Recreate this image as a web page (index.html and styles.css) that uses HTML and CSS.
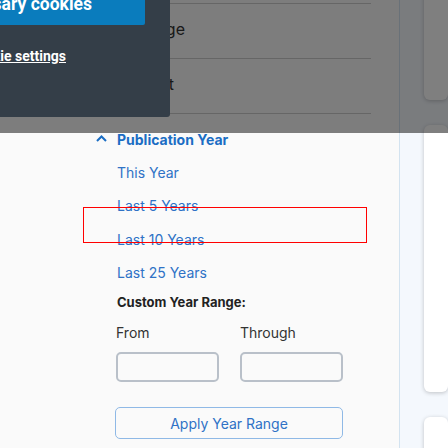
FILE: index.html
```html
<!DOCTYPE html>
<html>
<head>
<meta charset="utf-8">
<link rel="stylesheet" href="styles.css">
</head>
<body>
<div class="layout">
  <main class="main">
    <div class="rows">
      <div class="row row-first"></div>
      <div class="row"><span class="row-text row-text-a">Results per page</span></div>
      <div class="row"><span class="row-text row-text-b">Most Relevant</span></div>
    </div>
    <section class="filter">
      <h3 class="filter-head">
        <svg class="chev" width="11" height="7" viewBox="0 0 11 7"><path d="M1 6 L5.5 1.5 L10 6" fill="none" stroke="#1a6dc4" stroke-width="2"/></svg>
        <span>Publication Year</span>
      </h3>
      <ul class="opts">
        <li>This Year</li>
        <li>Last 5 Years</li>
        <li>Last 10 Years</li>
        <li>Last 25 Years</li>
      </ul>
      <div class="custom">Custom Year Range:</div>
      <div class="range">
        <label class="field"><span>From</span><input class="box" type="text"></label>
        <label class="field"><span>Through</span><input class="box" type="text"></label>
      </div>
      <button class="apply">Apply Year Range</button>
    </section>
  </main>
  <aside class="aside">
    <div class="card card-top"></div>
    <div class="card card-mid"></div>
    <div class="card card-low"></div>
  </aside>
</div>
<div class="highlight"></div>
<div class="overlay"></div>
<div class="cookie">
  <div class="cookie-btn"><span>Allow necessary cookies</span></div>
  <div class="cookie-link"><span>Cookie settings</span></div>
</div>
</body>
</html>
```
FILE: styles.css
```css
* { box-sizing: border-box; }
html, body { margin: 0; padding: 0; }
body {
  width: 448px;
  height: 448px;
  overflow: hidden;
  font-family: Inter, "Noto Sans", sans-serif;
  background: #fafafa;
  position: relative;
}
.layout {
  display: grid;
  grid-template-columns: 399px 1fr;
  height: 448px;
}
.main {
  background: #fafafa;
}
.rows {
  width: 371px;
}
.row {
  height: 55px;
  border-bottom: 1px solid #cdcdcd;
  display: flex;
  align-items: center;
  font-size: 16px;
  color: #333;
}
.row-first { height: 4px; }
.row-text { display: block; text-align: right; white-space: nowrap; }
.row-text-a { width: 185px; margin-top: -4px; }
.row-text-b { width: 174px; margin-top: -4px; }

.filter {
  padding: 17px 0 0 96px;
}
.filter-head {
  margin: 0;
  display: flex;
  align-items: center;
  gap: 10px;
  font-size: 14px;
  font-weight: 700;
  color: #1a6dc4;
  height: 16px;
}
.chev { display: block; margin-top: -1px; }
.opts {
  list-style: none;
  margin: 0;
  padding: 0 0 0 21px;
}
.opts li {
  font-size: 14px;
  color: #2f72c6;
  height: 33.3px;
  line-height: 16px;
}
.opts li:first-child { margin-top: 18px; }
.custom {
  margin: -4px 0 0 21px;
  font-size: 13px;
  font-weight: 700;
  color: #222;
  line-height: 16px;
}
.range {
  display: flex;
  gap: 21px;
  margin: 15px 0 0 20px;
}
.field {
  display: flex;
  flex-direction: column;
  gap: 11px;
  font-size: 14px;
  color: #333;
  line-height: 16px;
}
.box {
  width: 103px;
  height: 30px;
  border: 2px solid #b9c0c9;
  border-radius: 5px;
  background: #fafafa;
  margin: 0;
  padding: 0;
}
.apply {
  display: block;
  margin: 25px 0 0 19px;
  width: 228px;
  height: 32px;
  border: 1px solid #8fb9e6;
  border-radius: 5px;
  background: #fafafa;
  color: #2f72c6;
  font-family: Inter, "Noto Sans", sans-serif;
  font-size: 14px;
  padding: 0;
}
.aside {
  background: #f4f8fd;
  border-left: 1px solid #d3e3f0;
  padding-left: 24px;
  display: flex;
  flex-direction: column;
  gap: 25px;
}
.card {
  background: #fff;
  border-radius: 6px;
  box-shadow: 0 1px 4px rgba(0,0,0,0.22);
  flex: none;
}
.card-top { margin-top: -100px; height: 200px; }
.card-mid { height: 267px; }
.card-low { height: 100px; }

.highlight {
  position: absolute;
  left: 83px;
  top: 207px;
  width: 284px;
  height: 36px;
  border: 1px solid #f00;
}
.overlay {
  position: absolute;
  left: 0; top: 0;
  width: 448px;
  height: 133px;
  background: rgba(0,0,0,0.5);
}
.cookie {
  position: absolute;
  left: 0; top: 0;
  width: 170px;
  height: 117px;
  background: #343e48;
  border-bottom-right-radius: 3px;
}
.cookie-btn {
  position: absolute;
  left: 0;
  top: -18px;
  width: 145px;
  height: 43px;
  background: #0a7cbd;
  border-bottom-right-radius: 2px;
  display: flex;
  justify-content: flex-end;
  align-items: center;
  overflow: hidden;
  padding-right: 53px;
  color: #fff;
  font-family: Roboto, "Liberation Sans", sans-serif;
  font-weight: 700;
  font-size: 17.5px;
  line-height: 22px;
  white-space: nowrap;
}
.cookie-link {
  position: absolute;
  left: 0;
  top: 48px;
  width: 170px;
  display: flex;
  justify-content: flex-end;
  overflow: hidden;
  padding-right: 104px;
  color: #fff;
  font-family: Roboto, "Liberation Sans", sans-serif;
  font-weight: 700;
  font-size: 14px;
  text-decoration: underline;
  white-space: nowrap;
}
.cookie-link span, .cookie-btn span { flex: none; }
```
